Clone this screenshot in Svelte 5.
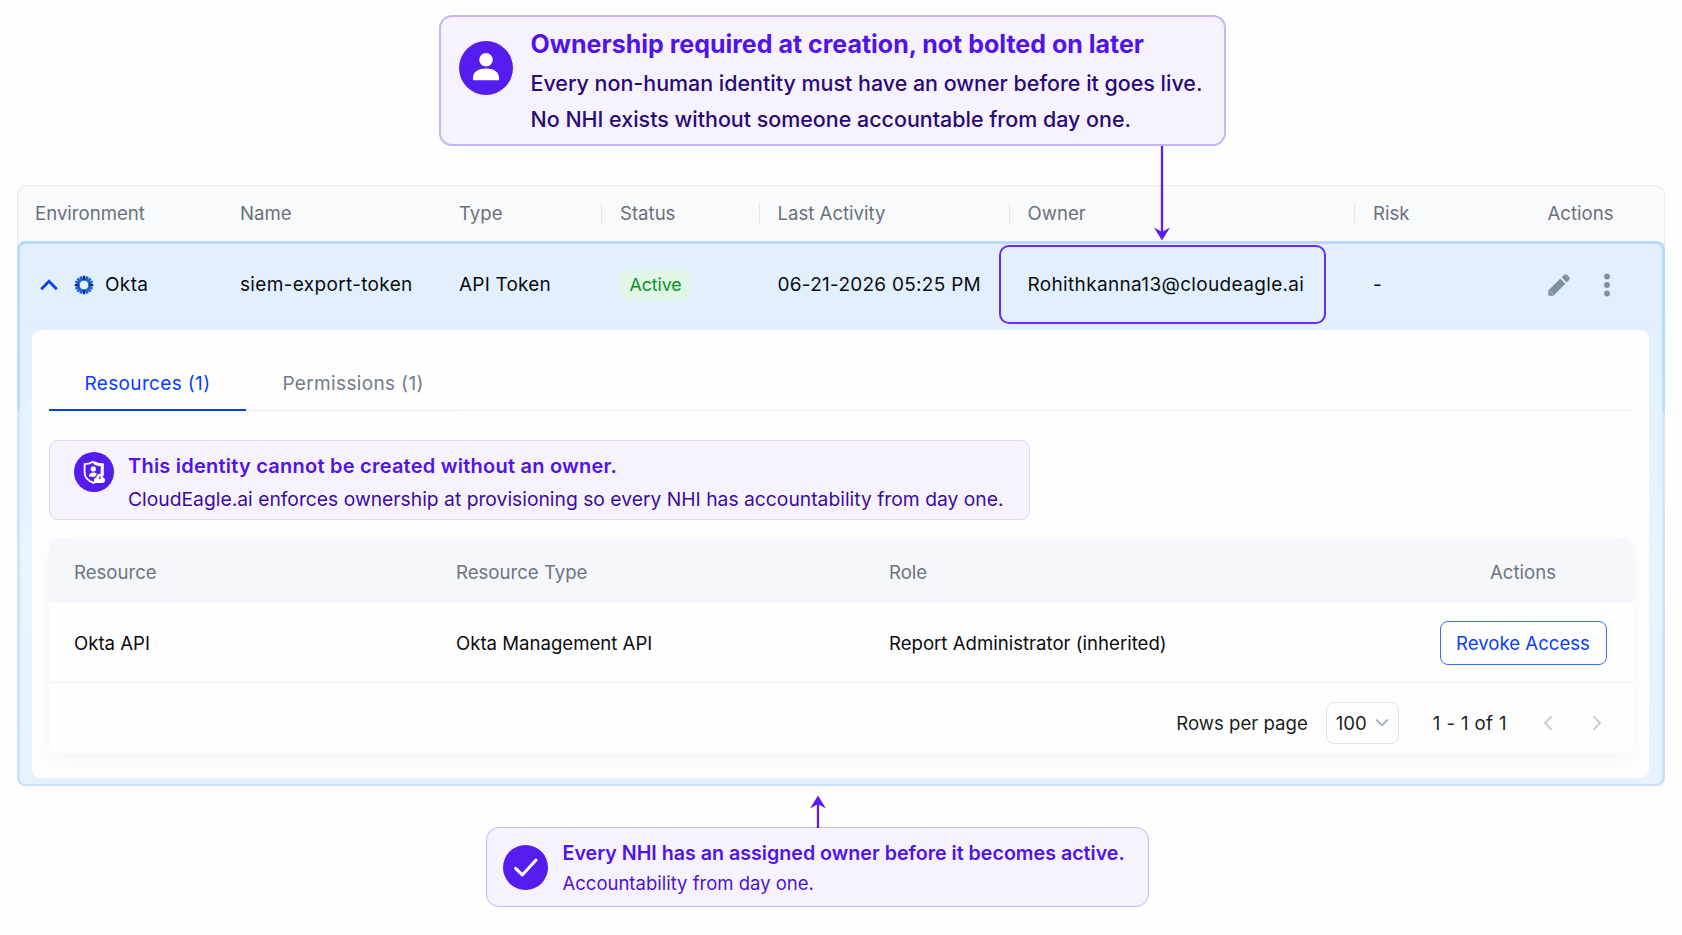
<script>
	const columns = [
		{ label: "Environment" },
		{ label: "Name" },
		{ label: "Type" },
		{ label: "Status", divider: true },
		{ label: "Last Activity", divider: true },
		{ label: "Owner", divider: true },
		{ label: "Risk", divider: true },
		{ label: "Actions" }
	];

	const identity = {
		environment: "Okta",
		name: "siem-export-token",
		type: "API Token",
		status: "Active",
		lastActivity: "06-21-2026 05:25 PM",
		owner: "Rohithkanna13@cloudeagle.ai",
		risk: "-"
	};

	const tabs = [
		{ id: "resources", label: "Resources (1)" },
		{ id: "permissions", label: "Permissions (1)" }
	];

	const resources = [
		{ name: "Okta API", type: "Okta Management API", role: "Report Administrator (inherited)" }
	];

	const rays = Array.from({ length: 16 }, (_, i) => i * 22.5);

	let active = "resources";
</script>

<main>
	<section class="callout top">
		<svg class="badge" viewBox="0 0 54 54">
			<circle cx="27" cy="27" r="27" />
			<circle class="glyph" cx="27" cy="18.8" r="6.8" />
			<path class="glyph" d="M14 39.3v-2.3c0-6.2 5.6-9.4 13-9.4s13 3.2 13 9.4v2.3z" />
		</svg>
		<div>
			<h2>Ownership required at creation, not bolted on later</h2>
			<p>Every non-human identity must have an owner before it goes live.</p>
			<p>No NHI exists without someone accountable from day one.</p>
		</div>
		<svg class="arrow" viewBox="0 0 14 94">
			<path d="M7 0v90M2.3 84.6l4.7 7.6 4.7-7.6L7 87.2z" />
		</svg>
	</section>

	<section class="card">
		<div class="grid head">
			{#each columns as column}
				<div class="cell" class:divider={column.divider}>{column.label}</div>
			{/each}
		</div>

		<div class="expanded">
			<div class="body">
				<div class="grid row">
					<div class="cell env">
						<svg class="caret" viewBox="0 0 18 12"><path d="M1.2 10.3 9 2.2l7.8 8.1" /></svg>
						<svg class="okta" viewBox="0 0 20 20">
							<circle cx="10" cy="10" r="6.1" />
							{#each rays as angle, i}
								<path class:dark={i % 4 === 0} d="M10 .7v4.6" transform="rotate({angle} 10 10)" />
							{/each}
						</svg>
						<span>{identity.environment}</span>
					</div>
					<div class="cell">{identity.name}</div>
					<div class="cell type">{identity.type}</div>
					<div class="cell"><span class="status">{identity.status}</span></div>
					<div class="cell date">{identity.lastActivity}</div>
					<div class="cell owner">{identity.owner}</div>
					<div class="cell">{identity.risk}</div>
					<div class="cell actions">
						<svg class="pencil" viewBox="0 0 22 22">
							<path d="M.3 21.7v-5.2L12.3 4.6l5.1 5.1L5.4 21.7z" />
							<path d="M13.6 3.3 15.7 1.2a2.6 2.6 0 0 1 3.7 0l1.4 1.4a2.6 2.6 0 0 1 0 3.7l-2.1 2.1z" />
							<path class="cut" d="m1.9 16.9 3.2 3.2" />
						</svg>
						<svg class="dots" viewBox="0 0 6 24">
							<circle cx="3" cy="3.5" r="2.9" />
							<circle cx="3" cy="12" r="2.9" />
							<circle cx="3" cy="20.5" r="2.9" />
						</svg>
					</div>
				</div>

				<div class="panel">
					<div class="tabs">
						{#each tabs as tab}
							<button
								class="tab"
								class:selected={active === tab.id}
								on:click={() => (active = tab.id)}>{tab.label}</button
							>
						{/each}
					</div>

					<div class="notice">
						<svg class="shield" viewBox="0 0 40 40">
							<circle cx="20" cy="20" r="20" />
							<path
								class="outline"
								d="M19.5 9.6c-2.8 1.9-5.6 2.4-8.9 2.5v8.4c0 4.8 3.4 8.3 8.9 10.3 2-.7 3.5-1.5 4.8-2.5"
							/>
							<path class="glyph" d="M19.5 8.8c2.9 1.9 6 2.5 10.3 2.5v12.4h-3.1v-9.4c-2.9-.3-5-1-7.2-2.4z" />
							<circle class="glyph" cx="19.3" cy="16.9" r="2.6" />
							<path class="glyph" d="M14.9 24.6c0-2.8 1.9-4.2 4.4-4.2 1.7 0 2.9.6 3.6 1.7l-2.3 2.9z" />
							<path
								class="glyph"
								d="M22.4 25.4c.3-2.4 1.6-3.6 3.3-3.6s3 1.2 3.3 3.4c1.4.6 2 1.6 2 3 0 1.700-1 2.700-2.700 2.700h-5.400c-1.900 0-3-1-3-2.700 0-1.400.9-2.500 2.500-2.800z"
							/>
							<path class="key" d="M25.800 24.400v2.600" />
						</svg>
						<div>
							<h3>This identity cannot be created without an owner.</h3>
							<p>
								CloudEagle.ai enforces ownership at provisioning so every NHI has accountability from
								day one.
							</p>
						</div>
					</div>

					<div class="table">
						<div class="resource-grid resource-head">
							<div>Resource</div>
							<div>Resource Type</div>
							<div>Role</div>
							<div class="center">Actions</div>
						</div>
						{#each resources as resource}
							<div class="resource-grid resource-row">
								<div>{resource.name}</div>
								<div>{resource.type}</div>
								<div>{resource.role}</div>
								<div class="center"><button class="revoke">Revoke Access</button></div>
							</div>
						{/each}
						<div class="footer">
							<span>Rows per page</span>
							<button class="select">
								100
								<svg viewBox="0 0 14 9"><path d="m1.2 1.500 5.800 5.800 5.800-5.800" /></svg>
							</button>
							<span class="range">1 - 1 of 1</span>
							<svg class="page" viewBox="0 0 10 16"><path d="M8.500 1.300 2 8l6.500 6.700" /></svg>
							<svg class="page next" viewBox="0 0 10 16"><path d="M1.500 1.300 8 8l-6.500 6.700" /></svg>
						</div>
					</div>
				</div>
			</div>
		</div>
	</section>

	<section class="callout bottom">
		<svg class="badge" viewBox="0 0 45 45">
			<circle cx="22.5" cy="22.5" r="22.5" />
			<path class="tick" d="m12.6 23.400 6.700 6.500L33 15" />
		</svg>
		<div>
			<h2>Every NHI has an assigned owner before it becomes active.</h2>
			<p>Accountability from day one.</p>
		</div>
		<svg class="arrow" viewBox="0 0 14 32">
			<path d="M7 32V4M2.300 9.400 7 1.800l4.700 7.600L7 6.800z" />
		</svg>
	</section>
</main>

<style>
	:global(body) {
		margin: 0;
		background: #fefefe;
	}

	main {
		box-sizing: border-box;
		width: 1682px;
		height: 935px;
		padding: 15px 17px 0;
		font-family: Inter, "Liberation Sans", sans-serif;
		font-size: 18.6px;
		color: #0b0c10;
		white-space: nowrap;
	}

	main :global(*) {
		box-sizing: border-box;
	}

	svg {
		display: block;
		flex: none;
		fill: none;
		overflow: visible;
	}

	h2,
	h3,
	p {
		margin: 0;
	}

	button {
		font: inherit;
		letter-spacing: inherit;
		background: none;
		border: 0;
		padding: 0;
	}

	/* callouts */
	.callout {
		position: relative;
		display: flex;
		align-items: flex-start;
		background: #f6f2fe;
		border: 2px solid #c6b3fb;
		border-radius: 13px;
	}

	.top {
		width: 787px;
		height: 131px;
		margin-left: 422px;
		padding: 9px 0 0 18px;
	}

	.top .badge {
		width: 54px;
		height: 54px;
		margin: 14.5px 17.5px 0 0;
	}

	.badge,
	.shield {
		fill: #541ced;
	}

	.glyph {
		fill: #fff;
	}

	h2,
	h3 {
		color: #5014ea;
	}

	.top h2 {
		font-size: 25px;
		font-weight: 700;
		line-height: 36px;
		margin-bottom: 4px;
	}

	.top p {
		font-size: 21.45px;
		font-weight: 500;
		line-height: 35.5px;
		color: #2a0a77;
	}

	.arrow {
		position: absolute;
		width: 14px;
		stroke: #5a1cf0;
		fill: #5a1cf0;
		stroke-width: 2.3;
	}

	.top .arrow {
		top: 129px;
		left: 714px;
		height: 94px;
		z-index: 1;
	}

	/* identities table */
	.card {
		margin-top: 39px;
		width: 1648px;
		border: 1px solid #e9eaed;
		border-radius: 9px;
		background: #f9fafc;
	}

	.grid {
		display: grid;
		grid-template-columns: 205px 219px 161px 157.5px 250px 345.5px 174.5px 1fr;
		align-items: center;
	}

	.head {
		height: 55px;
		padding: 0 0 2px 17px;
		color: #6a717e;
	}

	.divider {
		position: relative;
	}

	.divider::before {
		content: "";
		position: absolute;
		left: -19px;
		top: 1px;
		width: 1px;
		height: 20px;
		background: #e3e5ea;
	}

	.expanded {
		height: 545px;
		padding: 3px 3px 2px;
		margin: 0 -1px -1px;
		border-radius: 8px;
		background: linear-gradient(#b9dbfe 0, #bcddfe 169px, #d2e7fc 171px, #c9e1fa 100%);
	}

	.body {
		height: 540px;
		padding: 0 12px;
		border-radius: 6px;
		background: linear-gradient(#e2f0fe 0, #e2f0fe 90px, #eaf4ff 60%, #e6f2fe 100%);
	}

	.row {
		height: 82px;
		margin: 0 -12px;
		padding-left: 15px;
		border-bottom: 1px solid #e0ebf7;
		font-size: 19px;
		letter-spacing: 0.34px;
	}

	.env {
		display: flex;
		align-items: center;
		padding-left: 5px;
	}

	.caret {
		width: 18px;
		height: 12px;
		stroke: #0b3ff5;
		stroke-width: 2.7;
	}

	.okta {
		width: 20px;
		height: 20px;
		margin: 0 11px 0 16px;
		stroke: #2a72dc;
		stroke-width: 3.2;
	}

	.okta path {
		stroke: #1a62d6;
		stroke-width: 2.4;
	}

	.okta .dark {
		stroke: #082e78;
	}

	.type {
		letter-spacing: 0.2px;
	}

	.status {
		display: inline-block;
		padding: 0 9.5px;
		font-size: 17.8px;
		line-height: 31px;
		letter-spacing: -0.1px;
		color: #0a9426;
		background: #e2f6e8;
		border-radius: 7px;
	}

	.date {
		letter-spacing: 0.27px;
	}

	.owner {
		width: 327px;
		height: 79px;
		margin-left: -29px;
		padding-left: 27px;
		line-height: 75px;
		border: 2px solid #6b2bf3;
		border-radius: 10px;
	}

	.actions {
		display: flex;
		align-items: center;
	}

	.actions svg {
		fill: #80909c;
	}

	.pencil {
		width: 22px;
		height: 22px;
	}

	.cut {
		stroke: #b4c2ce;
		stroke-width: 0.8;
	}

	.dots {
		width: 6px;
		height: 24px;
		margin-left: 34px;
	}

	/* expanded panel */
	.panel {
		height: 448.5px;
		margin: 3.5px 1px 0 0;
		padding: 0 16px 0 16.5px;
		background: #fefefe;
		border-radius: 9px;
	}

	.tabs {
		display: flex;
		height: 81px;
		border-bottom: 1px solid #f0f1f3;
	}

	.tab {
		height: 81px;
		padding: 27px 36px 0;
		border-bottom: 1px solid #e8e9ec;
		font-size: 19px;
		letter-spacing: 0.35px;
		color: #747a87;
	}

	.tab.selected {
		padding-top: 28px;
		border-bottom: 2.6px solid #0b3ff5;
		color: #0b3ff5;
	}

	.notice {
		display: flex;
		align-items: flex-start;
		width: 981.5px;
		height: 80px;
		margin-top: 29.5px;
		padding: 8.5px 0 0 24.5px;
		background: #f6f2fe;
		border: 1px solid #e0d4fc;
		border-radius: 9px;
	}

	.shield {
		width: 40px;
		height: 40px;
		margin: 2.5px 14px 0 0;
	}

	.outline {
		stroke: #fff;
		stroke-width: 1.8;
	}

	.key {
		stroke: #541ced;
		stroke-width: 1.4;
	}

	h3 {
		font-size: 20px;
		font-weight: 600;
		line-height: 33.5px;
		letter-spacing: 0.23px;
	}

	.notice p {
		font-size: 19.3px;
		line-height: 33.5px;
		color: #3d0c9b;
	}

	.table {
		height: 214px;
		margin-top: 18.5px;
		border-radius: 8px;
		box-shadow: 0 8px 22px rgba(40, 40, 50, 0.045);
	}

	.resource-grid {
		display: grid;
		grid-template-columns: 382px 433px 550px 220px;
		align-items: center;
		padding-left: 25.5px;
	}

	.resource-head {
		height: 64px;
		padding-top: 2px;
		background: #f6f7fc;
		border-radius: 8px 8px 0 0;
		color: #6d7480;
	}

	.resource-row {
		height: 80px;
		padding-top: 2px;
		border-bottom: 1px solid #f2f3f5;
	}

	.center {
		width: 220px;
		display: flex;
		justify-content: center;
		margin-left: -26px;
	}

	.revoke {
		width: 167px;
		height: 44px;
		border: 1.5px solid #3c6cf6;
		border-radius: 8px;
		color: #0b3ff5;
	}

	.footer {
		display: flex;
		align-items: center;
		justify-content: flex-end;
		height: 70px;
		padding: 10px 31px 0 0;
		color: #1c1e22;
	}

	.select {
		display: flex;
		align-items: center;
		justify-content: space-between;
		width: 73px;
		height: 42px;
		margin: 0 34px 0 18px;
		padding: 0 9px;
		border: 1.5px solid #dfe2ea;
		border-radius: 8px;
		color: #1c1e22;
	}

	.select svg {
		width: 14px;
		height: 9px;
		stroke: #9aa6b2;
		stroke-width: 1.7;
	}

	.range {
		letter-spacing: 0.4px;
	}

	.page {
		width: 10px;
		height: 16px;
		margin-left: 36px;
		stroke: #c3cad2;
		stroke-width: 1.9;
	}

	.next {
		margin-left: 39px;
	}

	/* bottom callout */
	.bottom {
		width: 663.5px;
		height: 80px;
		margin: 41px 0 0 468.5px;
		padding: 10px 0 0 16px;
		border-width: 1.5px;
	}

	.bottom .badge {
		width: 45px;
		height: 45px;
		margin: 7px 15px 0 0;
	}

	.tick {
		stroke: #fff;
		stroke-width: 3;
		stroke-linecap: round;
		stroke-linejoin: round;
	}

	.bottom h2 {
		font-size: 19.65px;
		font-weight: 600;
		line-height: 30.5px;
	}

	.bottom p {
		font-size: 18.5px;
		line-height: 29.5px;
		color: #4c14cf;
	}

	.bottom .arrow {
		top: -32.5px;
		left: 324px;
		height: 32px;
	}
</style>
